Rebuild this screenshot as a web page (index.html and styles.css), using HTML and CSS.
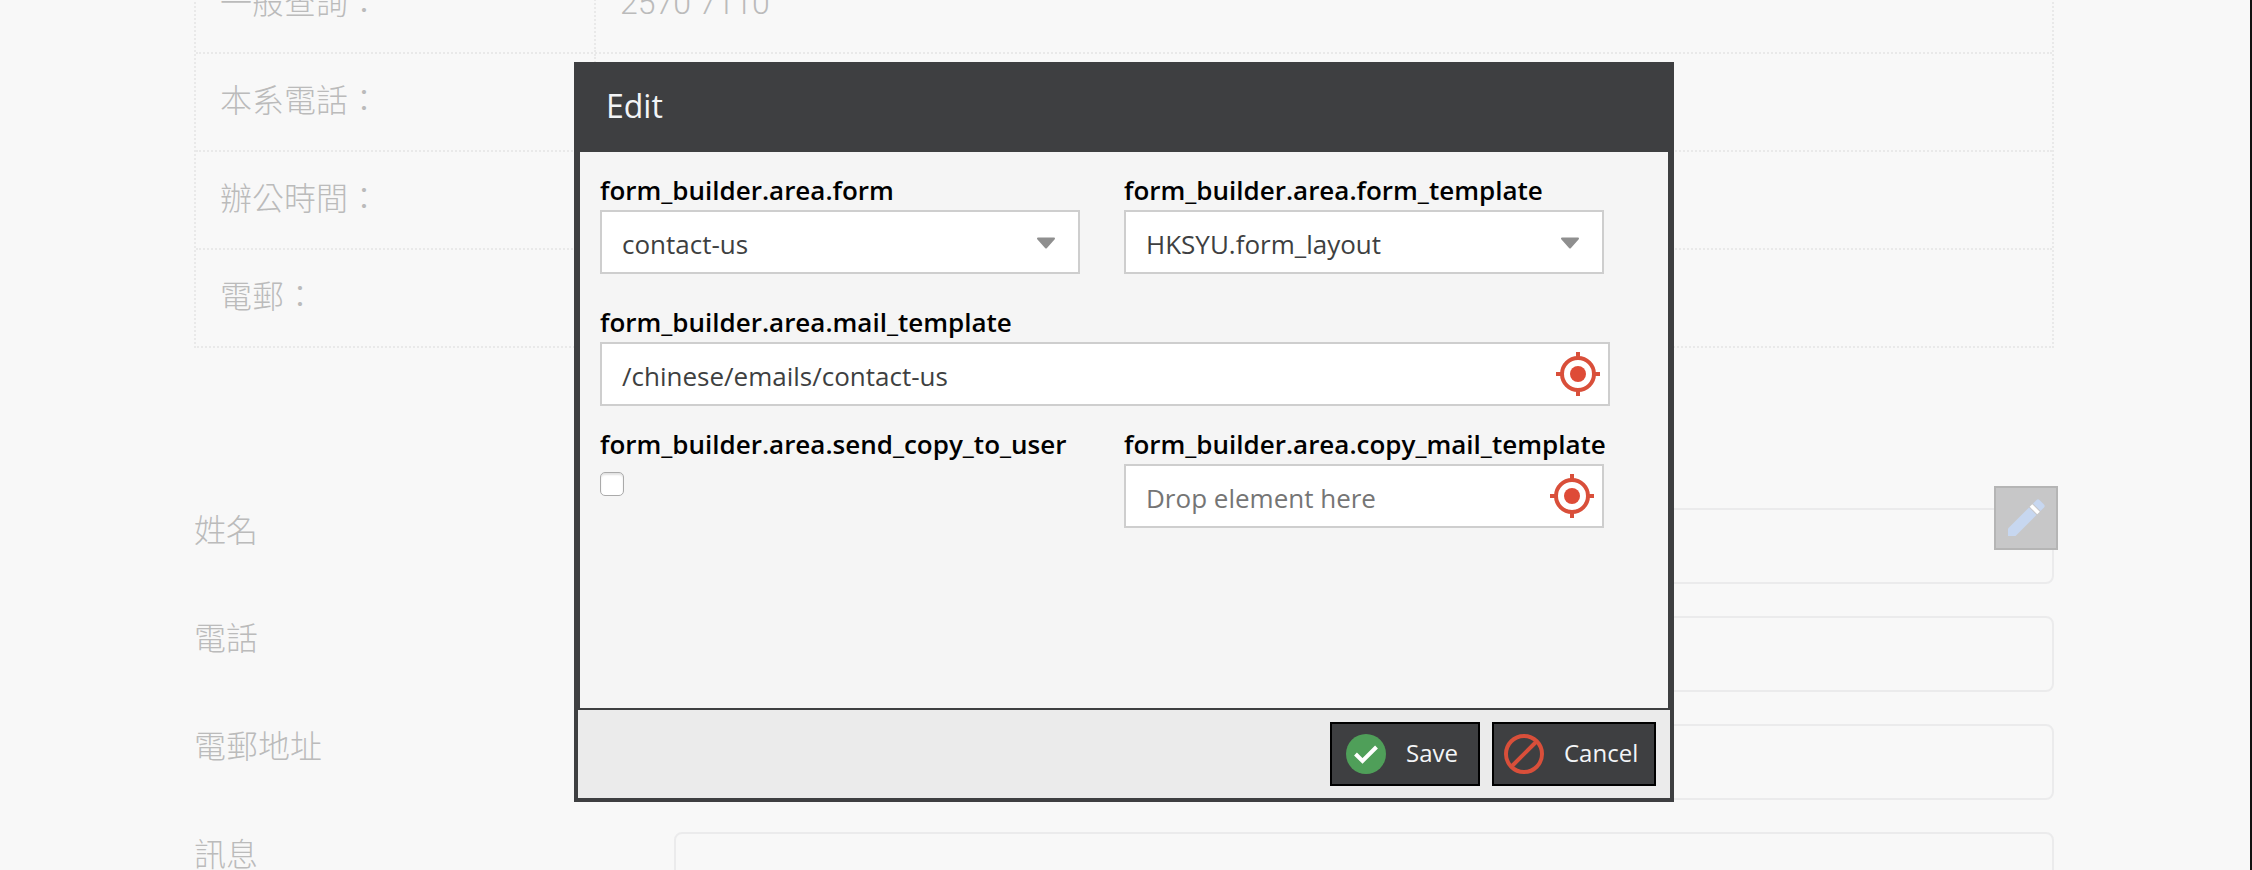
FILE: index.html
```html
<!DOCTYPE html>
<html lang="zh-Hant">
<head>
<meta charset="utf-8">
<title>Edit</title>
<link rel="stylesheet" href="styles.css">
</head>
<body>
<div class="page">
  <div class="info">
    <div class="info-row"><div class="info-key">一般查詢：</div><div class="info-value">2570 7110</div></div>
    <div class="info-row"><div class="info-key">本系電話：</div><div class="info-value"></div></div>
    <div class="info-row"><div class="info-key">辦公時間：</div><div class="info-value"></div></div>
    <div class="info-row"><div class="info-key">電郵：</div><div class="info-value"></div></div>
  </div>
  <div class="contact">
    <div class="contact-row"><div class="contact-label">姓名</div><div class="contact-input"></div></div>
    <div class="contact-row"><div class="contact-label">電話</div><div class="contact-input"></div></div>
    <div class="contact-row"><div class="contact-label">電郵地址</div><div class="contact-input"></div></div>
    <div class="contact-row"><div class="contact-label">訊息</div><div class="contact-input contact-input-tall"></div></div>
    <div class="edit-handle">
      <svg width="40" height="40" viewBox="0 0 40 40"><path d="M2 30.500V38H9.500L30.500 17L23 9.500Z" fill="#c7d7f0"/><path d="M27 5.500L30.500 2Q32 .6 33.500 2L38 6.500Q39.400 8 38 9.500L34.500 13Z" fill="#c7d7f0"/><path d="M26.300 6.200L33.800 13.700L31.200 16.300L23.700 8.800Z" fill="#fff"/></svg>
    </div>
  </div>
</div>

<div class="dialog">
  <div class="dialog-header">Edit</div>
  <div class="dialog-body">
    <div class="field">
      <div class="field-label">form_builder.area.form</div>
      <div class="control"><span>contact-us</span>
        <svg class="caret" width="20" height="12" viewBox="0 0 20 12"><path d="M2 1.500H18L10 10.500Z" fill="#8f8f8f" stroke="#8f8f8f" stroke-width="2" stroke-linejoin="round"/></svg>
      </div>
    </div>
    <div class="field">
      <div class="field-label">form_builder.area.form_template</div>
      <div class="control"><span>HKSYU.form_layout</span>
        <svg class="caret" width="20" height="12" viewBox="0 0 20 12"><path d="M2 1.500H18L10 10.500Z" fill="#8f8f8f" stroke="#8f8f8f" stroke-width="2" stroke-linejoin="round"/></svg>
      </div>
    </div>
    <div class="field field-wide">
      <div class="field-label">form_builder.area.mail_template</div>
      <div class="control control-drop"><span>/chinese/emails/contact-us</span>
        <svg width="48" height="48" viewBox="0 0 48 48"><circle cx="24" cy="24" r="16" fill="none" stroke="#d94f3a" stroke-width="4"/><circle cx="24" cy="24" r="8" fill="#de4b37"/><path d="M24 2V8M24 40V46M2 24H8M40 24H46" stroke="#d94f3a" stroke-width="4"/></svg>
      </div>
    </div>
    <div class="field">
      <div class="field-label">form_builder.area.send_copy_to_user</div>
      <div class="checkbox"></div>
    </div>
    <div class="field">
      <div class="field-label">form_builder.area.copy_mail_template</div>
      <div class="control control-drop placeholder"><span>Drop element here</span>
        <svg width="48" height="48" viewBox="0 0 48 48"><circle cx="24" cy="24" r="16" fill="none" stroke="#d94f3a" stroke-width="4"/><circle cx="24" cy="24" r="8" fill="#de4b37"/><path d="M24 2V8M24 40V46M2 24H8M40 24H46" stroke="#d94f3a" stroke-width="4"/></svg>
      </div>
    </div>
  </div>
  <div class="dialog-footer">
    <div class="button button-save">
      <svg width="40" height="40" viewBox="0 0 40 40"><circle cx="20" cy="20" r="20" fill="#4f9f59"/><path d="M9.500 20L16.500 27L30.500 13" fill="none" stroke="#fff" stroke-width="4"/></svg>
      <span>Save</span>
    </div>
    <div class="button button-cancel">
      <svg width="40" height="40" viewBox="0 0 40 40"><circle cx="20" cy="20" r="18" fill="none" stroke="#d94f3a" stroke-width="4"/><path d="M7.500 32.500L32.500 7.500" stroke="#d94f3a" stroke-width="4"/></svg>
      <span>Cancel</span>
    </div>
  </div>
</div>
</body>
</html>
```
FILE: styles.css
```css
* { box-sizing: border-box; }

body {
  margin: 0;
  height: 870px;
  overflow: hidden;
  background: #f8f8f8;
  border-right: 2px solid #111;
  font-family: "Open Sans", "Noto Sans CJK TC", sans-serif;
}

.page {
  height: 870px;
  overflow: hidden;
  padding: 0 196px 0 194px;
  font-family: Roboto, "Noto Sans CJK TC", sans-serif;
  font-size: 32px;
  font-weight: 300;
  color: #bbb;
}

/* Contact details table */
.info {
  margin-top: -46px;
  width: 1860px;
  border: 2px dotted #e9e9e9;
}

.info-row {
  display: flex;
  height: 98px;
  border-bottom: 2px dotted #e9e9e9;
}

.info-row:last-child { height: 96px; border-bottom: 0; }

.info-key {
  width: 400px;
  padding-left: 24px;
  border-right: 2px dotted #e9e9e9;
  line-height: 94px;
}

.info-value { padding-left: 24px; line-height: 94px; }

/* Enquiry form */
.contact {
  position: relative;
  display: flex;
  flex-direction: column;
  gap: 32px;
  width: 1860px;
  margin-top: 160px;
}

.contact-row { display: flex; }

.contact-label { width: 480px; line-height: 46px; }

.contact-input {
  flex: 1;
  height: 76px;
  border: 2px solid #ebebec;
  border-radius: 8px;
}

.contact-input-tall { height: 200px; }

.edit-handle {
  position: absolute;
  top: -22px;
  right: -4px;
  display: flex;
  align-items: center;
  justify-content: center;
  width: 64px;
  height: 64px;
  background: #c7c7c8;
  border: 2px solid #b5b5b5;
}

/* Dialog floating over the page */
.dialog {
  position: absolute;
  top: 62px;
  left: 574px;
  display: flex;
  flex-direction: column;
  width: 1100px;
  height: 740px;
  background: #3e3f41;
  border: 4px solid #3e3f41;
  border-top: 0;
}

.dialog-header {
  height: 90px;
  padding-left: 28px;
  font-size: 32px;
  line-height: 88px;
  color: #f3f5f7;
}

.dialog-body {
  flex: 1;
  display: grid;
  grid-template-columns: 480px 486px;
  grid-template-rows: 132px 122px auto;
  column-gap: 44px;
  margin: 0 2px;
  padding: 22px 20px 0;
  background: #f5f5f5;
}

.field-wide { grid-column: 1 / 3; }

.field-label {
  height: 36px;
  font-size: 26px;
  font-weight: 600;
  line-height: 32px;
  white-space: nowrap;
  color: #000;
}

.control {
  display: flex;
  align-items: center;
  justify-content: space-between;
  width: 480px;
  height: 64px;
  padding: 0 22px 0 20px;
  background: #fff;
  border: 2px solid #cecece;
  font-size: 26px;
  line-height: 60px;
  color: #3e3f41;
}

.control span { padding-top: 4px; }

.caret { margin-top: 1px; }

.control-drop { padding-right: 6px; }

.field-wide .control { width: 1010px; }

.placeholder { color: #757575; }

.checkbox {
  width: 24px;
  height: 24px;
  margin-top: 8px;
  background: #fff;
  border: 1px solid #aaa;
  border-radius: 5px;
  box-shadow: inset 0 2px 2px #e2e2e2;
}

.dialog-footer {
  display: flex;
  justify-content: flex-end;
  gap: 12px;
  height: 88px;
  margin-top: 2px;
  padding: 12px 14px 0 0;
  background: #ebebeb;
}

.button {
  display: flex;
  align-items: center;
  height: 64px;
  background: #3e3f41;
  border: 2px solid #000;
  font-size: 24px;
  line-height: 58px;
  color: #f3f5f7;
}

.button span { padding-bottom: 2px; }

.button-save { width: 150px; padding-left: 14px; gap: 20px; }

.button-cancel { width: 164px; padding-left: 10px; gap: 20px; }
```
